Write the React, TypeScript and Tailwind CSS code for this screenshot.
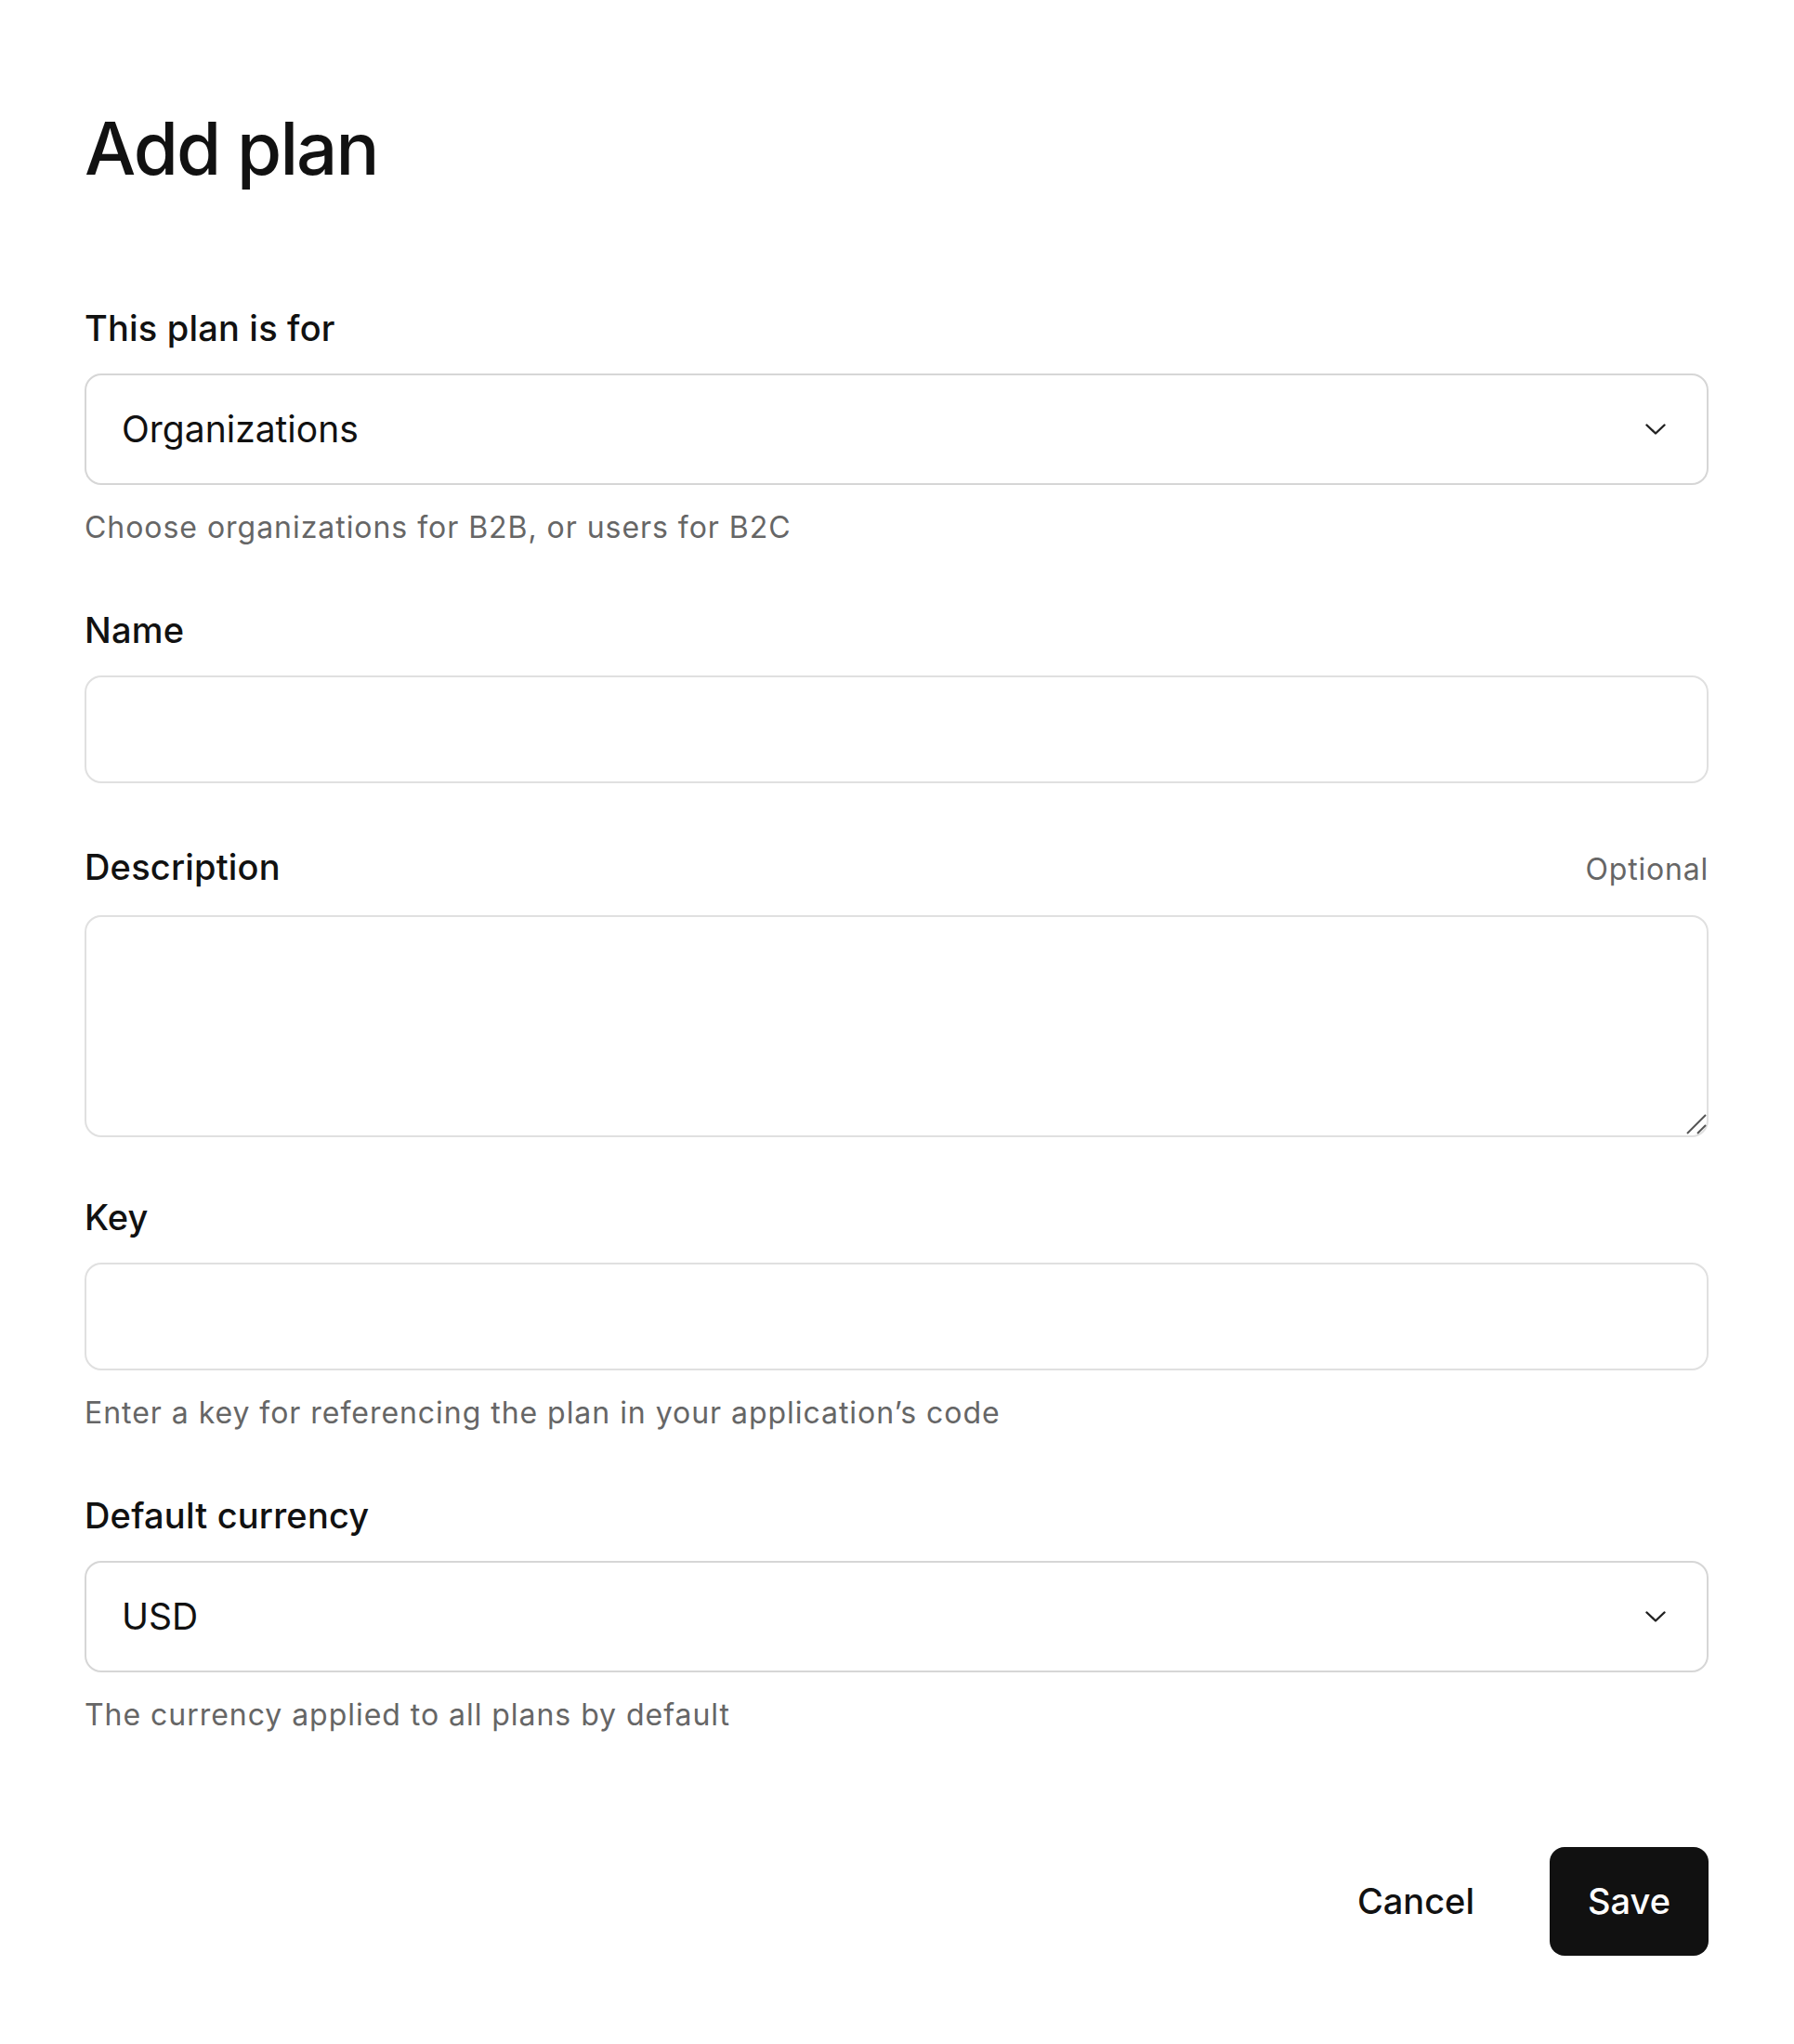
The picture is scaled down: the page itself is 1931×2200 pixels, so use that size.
import React from "react";

function Chevron() {
  return (
    <svg width="22" height="12" viewBox="0 0 22 12" fill="none" className="shrink-0">
      <path d="M1.5 1.5 L11 10.5 L20.5 1.5" stroke="#222" strokeWidth="2.4" strokeLinecap="round" strokeLinejoin="round" />
    </svg>
  );
}

function Field(props: { label: string; optional?: boolean; helper?: string; className?: string; children: React.ReactNode }) {
  return (
    <div className={"flex flex-col " + (props.className ?? "")}>
      <div className="flex justify-between items-baseline">
        <label className="text-[38px] leading-[46px] font-medium text-[#111] tracking-[0.005em]">{props.label}</label>
        {props.optional ? <span className="text-[32px] leading-[46px] text-[#666] tracking-[0.025em]">Optional</span> : null}
      </div>
      <div className="mt-[26px]">{props.children}</div>
      {props.helper ? <p className="mt-[26px] text-[32px] leading-[40px] text-[#666] tracking-[0.03em]">{props.helper}</p> : null}
    </div>
  );
}

function SelectBox(props: { value: string }) {
  return (
    <button type="button" className="w-full h-[120px] flex items-center justify-between pl-[38px] pr-[44px] border-2 border-[#d6d6d6] rounded-[18px] bg-white text-left">
      <span className="text-[39px] leading-[48px] text-[#111]">{props.value}</span>
      <Chevron />
    </button>
  );
}

function TextInput() {
  return <input type="text" className="w-full h-[116px] px-[38px] border-2 border-[#e0e0e0] rounded-[18px] bg-white text-[39px] outline-none" />;
}

export default function App() {
  return (
    <div className="min-h-screen bg-white font-['Inter','Noto_Sans',sans-serif] text-[#111]">
      <div className="w-[1748px] ml-[91px] pt-[121px] pb-[90px]">
        <h1 className="text-[78px] leading-[78px] font-medium tracking-tight">Add plan</h1>

        <div className="mt-[131px] flex flex-col">
          <Field label="This plan is for" helper="Choose organizations for B2B, or users for B2C">
            <SelectBox value="Organizations" />
          </Field>

          <Field label="Name" className="mt-[67px]">
            <TextInput />
          </Field>

          <Field label="Description" optional className="mt-[67px]">
            <div className="relative">
              <textarea className="block w-full h-[239px] resize-none px-[38px] py-[30px] border-2 border-[#e0e0e0] rounded-[18px] bg-white text-[39px] outline-none" />
              <svg width="22" height="22" viewBox="0 0 22 22" className="absolute right-[2px] bottom-[3px] pointer-events-none">
                <path d="M1 21 L21 1" stroke="#555" strokeWidth="2" />
                <path d="M12 21 L21 12" stroke="#555" strokeWidth="2" />
              </svg>
            </div>
          </Field>

          <Field label="Key" helper="Enter a key for referencing the plan in your application’s code" className="mt-[63px]">
            <TextInput />
          </Field>

          <Field label="Default currency" helper="The currency applied to all plans by default" className="mt-[67px]">
            <SelectBox value="USD" />
          </Field>
        </div>

        <div className="mt-[122px] flex justify-end items-center gap-[40px]">
          <button type="button" className="h-[117px] px-[41px] text-[38px] font-medium text-[#111] bg-white">Cancel</button>
          <button type="button" className="h-[117px] px-[41px] rounded-[16px] text-[38px] font-medium text-white bg-[#111]">Save</button>
        </div>
      </div>
    </div>
  );
}
